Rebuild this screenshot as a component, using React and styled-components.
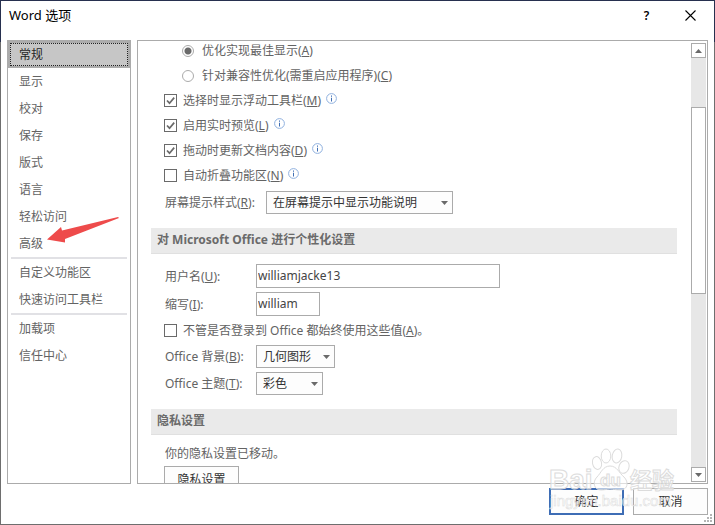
import styled, { createGlobalStyle, css } from "styled-components";

const navGroups = [
  ["常规", "显示", "校对", "保存", "版式", "语言", "轻松访问", "高级"],
  ["自定义功能区", "快速访问工具栏"],
  ["加载项", "信任中心"],
];

export default function App() {
  return (
    <Dialog>
      <GlobalStyle />
      <TitleBar>
        <Title>Word 选项</Title>
        <TitleButton aria-label="帮助">?</TitleButton>
        <TitleButton aria-label="关闭">
          <svg width="11" height="11" viewBox="0 0 11 11">
            <path d="M0.5 0.5l10 10M10.5 0.5l-10 10" stroke="#000" strokeWidth="1.1" />
          </svg>
        </TitleButton>
      </TitleBar>

      <Main>
        <Sidebar>
          {navGroups.map((group) => (
            <NavGroup key={group[0]}>
              {group.map((name) => (
                <NavItem key={name} $active={name === "常规"}>
                  {name}
                  {name === "高级" && <Arrow />}
                </NavItem>
              ))}
            </NavGroup>
          ))}
        </Sidebar>

        <Panel>
          <Content>
            <Options>
              <Choice $indent>
                <Radio name="display" defaultChecked />
                <span>优化实现最佳显示(<u>A</u>)</span>
              </Choice>
              <Choice $indent>
                <Radio name="display" />
                <span>针对兼容性优化(需重启应用程序)(<u>C</u>)</span>
              </Choice>
              <Choice>
                <Checkbox defaultChecked />
                <span>选择时显示浮动工具栏(<u>M</u>)</span>
                <Info />
              </Choice>
              <Choice>
                <Checkbox defaultChecked />
                <span>启用实时预览(<u>L</u>)</span>
                <Info />
              </Choice>
              <Choice>
                <Checkbox defaultChecked />
                <span>拖动时更新文档内容(<u>D</u>)</span>
                <Info />
              </Choice>
              <Choice>
                <Checkbox />
                <span>自动折叠功能区(<u>N</u>)</span>
                <Info />
              </Choice>
              <TipField>
                <Label htmlFor="tip" $width={102}>屏幕提示样式(<u>R</u>):</Label>
                <Select id="tip" $width={187}>
                  <option>在屏幕提示中显示功能说明</option>
                </Select>
              </TipField>
            </Options>

            <Heading>对 Microsoft Office 进行个性化设置</Heading>
            <Fields>
              <Field>
                <Label htmlFor="user" $width={92}>用户名(<u>U</u>):</Label>
                <TextInput id="user" $width={244} defaultValue="williamjacke13" />
              </Field>
              <Field>
                <Label htmlFor="initials" $width={92}>缩写(<u>I</u>):</Label>
                <TextInput id="initials" $width={64} defaultValue="william" />
              </Field>
              <Choice $compact>
                <Checkbox />
                <span>不管是否登录到 Office 都始终使用这些值(<u>A</u>)。</span>
              </Choice>
              <Field>
                <Label htmlFor="background" $width={92}>Office 背景(<u>B</u>):</Label>
                <Select id="background" $width={79}>
                  <option>几何图形</option>
                </Select>
              </Field>
              <Field>
                <Label htmlFor="theme" $width={92}>Office 主题(<u>T</u>):</Label>
                <Select id="theme" $width={67}>
                  <option>彩色</option>
                </Select>
              </Field>
            </Fields>

            <Heading>隐私设置</Heading>
            <Fields>
              <Note>你的隐私设置已移动。</Note>
              <Button>隐私设置</Button>
            </Fields>
          </Content>

          <Scrollbar>
            <ScrollButton aria-label="向上滚动">
              <svg width="7" height="4" viewBox="0 0 7 4">
                <path d="M0 4L3.5 0L7 4z" fill="#6a6a6a" />
              </svg>
            </ScrollButton>
            <Track>
              <Thumb />
            </Track>
            <ScrollButton aria-label="向下滚动">
              <svg width="7" height="4" viewBox="0 0 7 4">
                <path d="M0 0L3.5 4L7 0z" fill="#6a6a6a" />
              </svg>
            </ScrollButton>
          </Scrollbar>
        </Panel>
      </Main>

      <Footer>
        <Button $primary>确定</Button>
        <Button>取消</Button>
      </Footer>

      <Grip width="9" height="9" viewBox="0 0 9 9">
        <path
          d="M6 0h2v2h-2zM3 3h2v2h-2zM6 3h2v2h-2zM0 6h2v2h-2zM3 6h2v2h-2zM6 6h2v2h-2z"
          fill="#b5b5b5"
        />
      </Grip>
      <Watermark />
    </Dialog>
  );
}

function Info() {
  return (
    <InfoIcon width="11" height="11" viewBox="0 0 11 11">
      <circle cx="5.5" cy="5.5" r="4.9" fill="#fff" stroke="#8fb0de" />
      <path d="M5 2.5h1v1.2h-1zM5 4.8h1v3.6h-1z" fill="#3f6fb5" />
    </InfoIcon>
  );
}

function Arrow() {
  return (
    <ArrowMark width="72" height="26" viewBox="0 0 72 26">
      <path d="M0 22.5L14 10L15 13.5L71 0L72 1L18 22V25.5z" fill="#ee4b4b" />
    </ArrowMark>
  );
}

function Watermark() {
  return (
    <WatermarkBox aria-hidden="true">
      <svg width="130" height="64" viewBox="0 0 130 64">
        <g
          fill="#fff"
          fillOpacity="0.6"
          stroke="#dcdcdc"
          fontFamily="'Liberation Sans', sans-serif"
          fontWeight="700"
        >
          <text x="0" y="41" fontSize="28">Bai</text>
          <path d="M61 18c-7 0-9 7-13 11c-5 5-3 13 4 13c4 0 6-1 9-1s6 1 10 1c8 0 9-8 4-13c-5-4-7-11-14-11z" />
          <ellipse cx="48" cy="15" rx="4.5" ry="6.5" transform="rotate(-12 48 15)" />
          <ellipse cx="57" cy="8" rx="4.8" ry="7" />
          <ellipse cx="68" cy="8" rx="4.8" ry="7" transform="rotate(10 68 8)" />
          <ellipse cx="75" cy="19" rx="5" ry="6.5" transform="rotate(20 75 19)" />
          <text x="51" y="38" fontSize="17">du</text>
          <text x="81" y="40" fontSize="22" fontFamily="'Noto Sans CJK SC', sans-serif">
            经验
          </text>
        </g>
        <text
          x="1"
          y="58"
          fontSize="15"
          fill="#fff"
          fillOpacity="0.5"
          stroke="#dcdcdc"
          strokeWidth="0.5"
          fontFamily="'Liberation Sans', sans-serif"
        >
          jingyan.baidu.com
        </text>
      </svg>
    </WatermarkBox>
  );
}

const GlobalStyle = createGlobalStyle`
  * {
    box-sizing: border-box;
  }

  body {
    margin: 0;
    background: #fff;
  }

  body, button, input, select {
    font-family: "Noto Sans", "Noto Sans CJK SC", sans-serif;
    font-size: 12px;
    line-height: 17px;
    color: #636363;
  }
`;

const Dialog = styled.div`
  position: relative;
  display: flex;
  flex-direction: column;
  height: 100vh;
  padding: 0 6px 9px;
  border: 1px solid;
  border-image: linear-gradient(#27304f 42px, #6e6e6e 42px) 1;
  background: #fff;
`;

const TitleBar = styled.header`
  display: flex;
  align-items: center;
  height: 39px;
  padding: 0 0 10px 2px;
`;

const Title = styled.h1`
  flex: 1;
  margin: 0;
  font-size: 13px;
  font-weight: 400;
  color: #000;
`;

const TitleButton = styled.button`
  display: flex;
  align-items: center;
  justify-content: center;
  width: 53px;
  height: 29px;
  padding: 0;
  border: 0;
  background: none;
  font-weight: 600;
  color: #000;

  &:last-child {
    width: 35px;
  }
`;

const Main = styled.div`
  display: flex;
  flex: 1;
  gap: 6px;
  min-height: 0;
`;

// category list on the left
const Sidebar = styled.nav`
  width: 124px;
  border: 1px solid #ababab;
`;

const NavGroup = styled.div`
  & + &::before {
    content: "";
    display: block;
    height: 2px;
    margin: 0 3px;
    background: #e1e1e5;
  }
`;

const NavItem = styled.button`
  position: relative;
  display: block;
  width: 100%;
  height: 27px;
  padding: 0 11px;
  border: 0;
  background: none;
  text-align: left;

  ${({ $active }) =>
    $active &&
    css`
      background: #c6c6c6;
      box-shadow: inset 0 0 0 2px #ababab;
      outline: 1px dotted #222;
      outline-offset: -3px;
      color: #262626;
    `}
`;

const ArrowMark = styled.svg`
  position: absolute;
  left: 39px;
  top: -13px;
`;

const Panel = styled.main`
  display: flex;
  flex: 1;
  min-width: 0;
  padding-right: 1px;
  border: 1px solid #ababab;
  overflow: hidden;
`;

const Content = styled.div`
  flex: 1;
  min-width: 0;
  margin-top: -3px;
  padding: 0 14px 0 13px;
`;

const Options = styled.div`
  padding: 0 13px 14px;
`;

const Choice = styled.label`
  display: flex;
  align-items: center;
  gap: 6px;
  height: ${({ $compact }) => ($compact ? 21 : 25)}px;
  padding-left: ${({ $indent }) => ($indent ? 18 : 0)}px;
  white-space: nowrap;

  & > span {
    margin-right: -1px;
  }
`;

const Checkbox = styled.input.attrs({ type: "checkbox" })`
  appearance: none;
  flex: none;
  width: 13px;
  height: 13px;
  margin: 0;
  border: 1px solid #6a6a6a;
  background: #fff;

  &:checked {
    background: #fff
      url("data:image/svg+xml,%3Csvg xmlns='http://www.w3.org/2000/svg' width='11' height='11'%3E%3Cpath d='M2 5.5L4.5 8.2L9.2 2.6' fill='none' stroke='%236a6a6a' stroke-width='1.7'/%3E%3C/svg%3E")
      no-repeat center;
  }
`;

const Radio = styled.input.attrs({ type: "radio" })`
  appearance: none;
  flex: none;
  width: 12px;
  height: 12px;
  margin: 0 2px 0 0;
  border: 1px solid #ababab;
  border-radius: 50%;
  background: #fff;

  &:checked {
    background: radial-gradient(circle, #6a6a6a 3px, #fff 4px);
  }
`;

const InfoIcon = styled.svg`
  flex: none;
  margin-bottom: 4px;
`;

const Field = styled.div`
  display: flex;
  align-items: center;
`;

const TipField = styled(Field)`
  padding-top: 3px;
`;

const Label = styled.label`
  flex: none;
  width: ${({ $width }) => $width}px;
  padding-left: 1px;
  white-space: nowrap;
`;

const Select = styled.select`
  appearance: none;
  width: ${({ $width }) => $width}px;
  height: 23px;
  padding: 0 6px;
  border: 1px solid #ababab;
  border-radius: 0;
  background: #fdfdfd
    url("data:image/svg+xml,%3Csvg xmlns='http://www.w3.org/2000/svg' width='7' height='4'%3E%3Cpath d='M0 0h7L3.5 4z' fill='%236a6a6a'/%3E%3C/svg%3E")
    no-repeat right 4px center;
  color: #333;
`;

const TextInput = styled.input`
  width: ${({ $width }) => $width}px;
  height: 24px;
  padding: 0 1px 2px;
  border: 1px solid #ababab;
  background: #fff;
  color: #444;
`;

const Heading = styled.h2`
  height: 26px;
  margin: 0;
  padding: 3px 6px;
  border-bottom: 1px solid #e0e0e0;
  background: #eaeaea;
  font-size: 12px;
  font-weight: 700;
  color: #6a6a6a;
`;

const Fields = styled.div`
  display: flex;
  flex-direction: column;
  align-items: flex-start;
  gap: 4px;
  padding: 10px 13px 14px;
`;

const Note = styled.p`
  margin: 0;
  padding-left: 1px;
`;

const Scrollbar = styled.div`
  display: flex;
  flex-direction: column;
  width: 15px;
  padding: 2px 0 1px;
`;

const ScrollButton = styled.button`
  display: flex;
  align-items: center;
  justify-content: center;
  width: 15px;
  height: 15px;
  padding: 0;
  border: 1px solid #ababab;
  background: #fff;
`;

const Track = styled.div`
  flex: 1;
  padding-top: 49px;
  background: #e7e7e7;
`;

const Thumb = styled.div`
  height: 52%;
  border: 1px solid #ababab;
  background: #fff;
`;

const Footer = styled.footer`
  display: flex;
  justify-content: flex-end;
  gap: 9px;
  padding-top: 4px;
`;

const Button = styled.button`
  width: 75px;
  height: 27px;
  padding: 0;
  border: ${({ $primary }) => ($primary ? "2px solid #3e6db5" : "1px solid #ababab")};
  background: #fdfdfd;
  color: #333;
`;

const Grip = styled.svg`
  position: absolute;
  right: 1px;
  bottom: 1px;
`;

const WatermarkBox = styled.div`
  position: absolute;
  right: 35px;
  bottom: 12px;
  height: 64px;
  pointer-events: none;
`;
